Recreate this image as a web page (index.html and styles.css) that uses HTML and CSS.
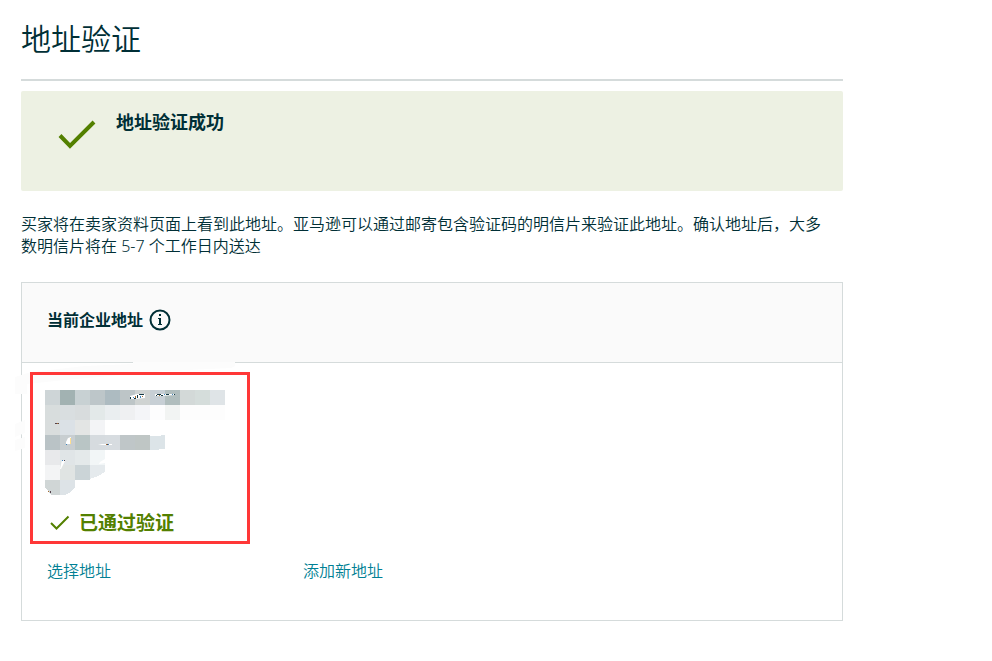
FILE: index.html
```html
<!DOCTYPE html>
<html lang="zh-CN">
  <head>
    <meta charset="UTF-8" />
    <meta name="viewport" content="width=device-width, initial-scale=1.0" />
    <title>地址验证</title>
    <link rel="stylesheet" href="styles.css">
  </head>
  <body>
    <main class="container">
      <h1>地址验证</h1>

      <div class="alert" role="status">
        <svg class="alert-icon" width="38" height="30" viewBox="0 0 38 30" aria-hidden="true">
          <path d="M2 15.500L12 26L36 2" fill="none" stroke="#538000" stroke-width="4" />
        </svg>
        <h2>地址验证成功</h2>
      </div>

      <p class="intro">
        买家将在卖家资料页面上看到此地址。亚马逊可以通过邮寄包含验证码的明信片来验证此地址。确认地址后，大多数明信片将在 5-7 个工作日内送达
      </p>

      <section class="card">
        <div class="card-header">
          <h3>当前企业地址</h3>
          <button type="button" class="info" aria-label="当前企业地址">
            <svg width="22" height="22" viewBox="0 0 22 22" aria-hidden="true">
              <circle cx="11" cy="11" r="9.500" fill="none" stroke="#002f36" stroke-width="2" />
              <rect x="10" y="5" width="2" height="2" fill="#002f36" />
              <path d="M9 9h3v6h1v1H9v-1h1v-5H9z" fill="#002f36" />
            </svg>
          </button>
        </div>

        <div class="card-body">
          <svg class="smudges" width="222" height="90" viewBox="0 0 222 90" aria-hidden="true">
            <path d="M0 15L16 10L70 4L118 2V0H220V4L216 6L150 9L50 18L12 22V32H0z" />
            <path d="M0 62L10 58V71L0 75z" />
            <path d="M0 78L10 75V86L0 89z" />
          </svg>

          <div class="highlight">
            <!-- blurred out address -->
            <svg class="mosaic" width="180" height="105" viewBox="0 0 180 105" aria-hidden="true">
              <g shape-rendering="crispEdges">
                <rect x="0" y="0" width="15" height="15" fill="#ced5d7" />
                <rect x="15" y="0" width="15" height="15" fill="#a2b2b2" />
                <rect x="30" y="0" width="15" height="15" fill="#c8d1d3" />
                <rect x="45" y="0" width="15" height="15" fill="#bdc6c9" />
                <rect x="60" y="0" width="15" height="15" fill="#adbbc1" />
                <rect x="75" y="0" width="15" height="15" fill="#bdc5c7" />
                <rect x="90" y="0" width="15" height="15" fill="#cfd3d2" />
                <rect x="105" y="0" width="15" height="15" fill="#c7cfd5" />
                <rect x="120" y="0" width="15" height="15" fill="#b0bdbd" />
                <rect x="135" y="0" width="15" height="15" fill="#d3d9d8" />
                <rect x="150" y="0" width="15" height="15" fill="#d5dddb" />
                <rect x="165" y="0" width="15" height="15" fill="#dfe4e7" />

                <rect x="0" y="15" width="15" height="15" fill="#d8dddd" />
                <rect x="15" y="15" width="15" height="15" fill="#d9dee0" />
                <rect x="30" y="15" width="15" height="15" fill="#d8dcdd" />
                <rect x="45" y="15" width="15" height="15" fill="#e3e9e9" />
                <rect x="60" y="15" width="15" height="15" fill="#eaeef0" />
                <rect x="75" y="15" width="15" height="15" fill="#eff0f2" />
                <rect x="90" y="15" width="15" height="15" fill="#f4f5f8" />
                <rect x="105" y="15" width="15" height="15" fill="#fdfdfe" />
                <rect x="120" y="15" width="15" height="15" fill="#f2f4f3" />
                <rect x="135" y="15" width="45" height="15" fill="#fdfdfd" />

                <rect x="0" y="30" width="15" height="15" fill="#d9dddd" />
                <rect x="15" y="30" width="15" height="15" fill="#dbe1e6" />
                <rect x="30" y="30" width="15" height="15" fill="#e3e5e4" />
                <rect x="45" y="30" width="15" height="15" fill="#f3f4f6" />

                <rect x="0" y="45" width="15" height="15" fill="#bac3c6" />
                <rect x="15" y="45" width="15" height="15" fill="#c8ced1" />
                <rect x="30" y="45" width="15" height="15" fill="#b9c5c5" />
                <rect x="45" y="45" width="15" height="15" fill="#d6dbdf" />
                <rect x="60" y="45" width="15" height="15" fill="#d7dce0" />
                <rect x="75" y="45" width="15" height="15" fill="#bfc6c8" />
                <rect x="90" y="45" width="15" height="15" fill="#bfc6c5" />
                <path d="M105 46H116V45H120V59H114V60H105z" fill="#dce4e8" />

                <rect x="0" y="60" width="15" height="15" fill="#e8e9eb" />
                <rect x="15" y="60" width="15" height="15" fill="#e0e5e7" />
                <rect x="30" y="60" width="15" height="15" fill="#e4e9ea" />
                <rect x="45" y="60" width="15" height="15" fill="#f2f6f7" />

                <rect x="0" y="75" width="15" height="15" fill="#f3f4f5" />
                <rect x="15" y="75" width="15" height="15" fill="#e0e4e3" />
                <rect x="30" y="75" width="15" height="15" fill="#cbd4d7" />
                <path d="M45 75H60V82L53 86L45 89z" fill="#e5eaed" />

                <path d="M0 90H15V105H6L4 102L0 98z" fill="#d0d6d6" />
                <path d="M15 90H30V97L24 103L20 105H15z" fill="#dde3e7" />
              </g>

              <!-- bits of text that were missed -->
              <g fill="#fff">
                <path d="M85 6L92 4H100V8L90 9H85z" />
                <path d="M110 4H130V5L116 6H110z" />
                <path d="M23 48L26 47V54H21V52z" />
                <path d="M57 54H67V55H53z" />
                <path d="M17 70L20 71L16 79H15z" />
                <path d="M55 72L60 69V73L54 74z" />
              </g>
              <g shape-rendering="crispEdges">
                <path d="M85 7h1v2h-1zM89 8h2v1h-2zM92 5h1v3h-1zM94 4h5v1h-5zM112 4h4v1h-4zM111 5h1v1h-1zM116 5h2v1h-2zM121 4h3v1h-3zM129 4h1v1h-1z" fill="#153842" />
                <path d="M88 7h1v1h-1zM95 6h1v2h-1zM119 4h1v1h-1zM127 4h1v1h-1zM21 54h1v1h-1zM63 54h1v1h-1zM17 70h1v1h-1z" fill="#3f86c0" />
                <path d="M90 6h1v2h-1zM97 6h1v1h-1zM114 5h1v1h-1zM12 33h1v1h-1zM61 54h1v1h-1zM3 101h1v1h-1z" fill="#a96d30" />
                <path d="M25 48h1v6h-1z" fill="#ffdf91" />
                <path d="M10 33h2v1h-2zM13 33h1v1h-1zM62 54h1v1h-1zM19 70h1v1h-1zM5 101h1v2h-1z" fill="#55434c" />
              </g>
            </svg>

            <div class="verified">
              <svg width="20" height="16" viewBox="0 0 20 16" aria-hidden="true">
                <path d="M1 8L6.500 13.500L18.500 1.500" fill="none" stroke="#538000" stroke-width="2" />
              </svg>
              <span>已通过验证</span>
            </div>
          </div>

          <div class="links">
            <a href="#">选择地址</a>
            <a href="#">添加新地址</a>
          </div>
        </div>
      </section>
    </main>
  </body>
</html>
```

FILE: styles.css
```css
* {
  box-sizing: border-box;
}
body {
  margin: 0;
  background-color: #fff;
  color: #002f36;
  font-family: "Noto Sans", "Noto Sans CJK SC", sans-serif;
  font-size: 16px;
  font-weight: 350;
  line-height: 22px;
}
.container {
  margin: 0 15% 40px 21px;
}
h1,
h2,
h3,
p {
  margin: 0;
}
h1 {
  padding: 19px 0 20px;
  border-bottom: 2px solid #d5dbdb;
  font-size: 30px;
  font-weight: 350;
  line-height: 40px;
}

/* Success message */
.alert {
  display: flex;
  align-items: flex-start;
  gap: 20px;
  min-height: 100px;
  margin-top: 10px;
  padding: 20px 37px;
  border-radius: 2px;
  background-color: #edf1e3;
}
.alert-icon {
  margin-top: 9px;
}
h2 {
  font-size: 18px;
  font-weight: 700;
  line-height: 22px;
}
.intro {
  margin: 22px 0 25px;
  padding-right: 8px;
}

/* Address card */
.card {
  border: 1px solid #d5dbdb;
}
.card-header {
  display: flex;
  align-items: center;
  gap: 6px;
  min-height: 80px;
  padding: 0 25px 6px;
  border-bottom: 1px solid #d5dbdb;
  background-color: #fafafa;
}
h3 {
  font-size: 16px;
  font-weight: 700;
}
.info {
  display: flex;
  padding: 0;
  border: 0;
  background: none;
  cursor: pointer;
}
.card-body {
  position: relative;
  padding: 9px 8px 38px;
}
.smudges {
  position: absolute;
  top: -1px;
  left: -7px;
  fill: #fcfcfc;
}
.highlight {
  position: relative;
  width: 220px;
  padding: 15px 12px 6px;
  border: 3px solid #ff3737;
}
.mosaic {
  display: block;
}
.verified {
  display: flex;
  align-items: center;
  gap: 9px;
  margin-top: 16px;
  padding-left: 5px;
  color: #538000;
  font-size: 19px;
  font-weight: 700;
  line-height: 24px;
}
.links {
  display: flex;
  gap: 192px;
  margin-top: 16px;
  padding-left: 17px;
}
.links a {
  color: #007f94;
  text-decoration: none;
}
.links a:hover {
  text-decoration: underline;
}
```
